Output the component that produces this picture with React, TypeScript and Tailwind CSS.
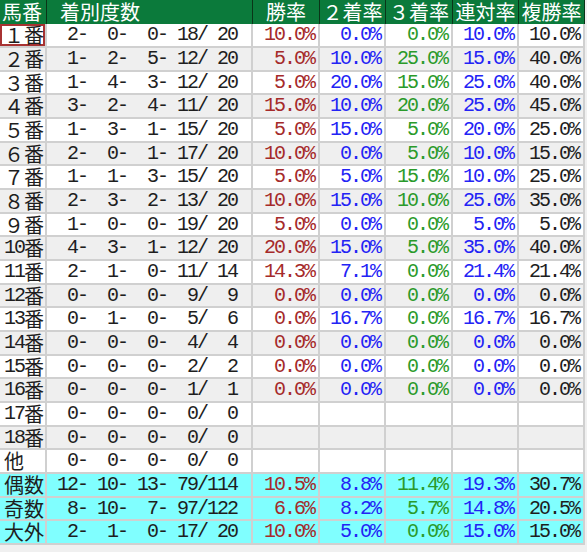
import React from "react";

type Row = {
  label: string;
  counts: number[];
  rates?: string[];
  kind: "white" | "gray" | "cyan";
};

const RAW: [string, number[], string[] | null][] = [
  ["１番", [2, 0, 0, 18, 20], ["10.0", "0.0", "0.0", "10.0", "10.0"]],
  ["２番", [1, 2, 5, 12, 20], ["5.0", "10.0", "25.0", "15.0", "40.0"]],
  ["３番", [1, 4, 3, 12, 20], ["5.0", "20.0", "15.0", "25.0", "40.0"]],
  ["４番", [3, 2, 4, 11, 20], ["15.0", "10.0", "20.0", "25.0", "45.0"]],
  ["５番", [1, 3, 1, 15, 20], ["5.0", "15.0", "5.0", "20.0", "25.0"]],
  ["６番", [2, 0, 1, 17, 20], ["10.0", "0.0", "5.0", "10.0", "15.0"]],
  ["７番", [1, 1, 3, 15, 20], ["5.0", "5.0", "15.0", "10.0", "25.0"]],
  ["８番", [2, 3, 2, 13, 20], ["10.0", "15.0", "10.0", "25.0", "35.0"]],
  ["９番", [1, 0, 0, 19, 20], ["5.0", "0.0", "0.0", "5.0", "5.0"]],
  ["10番", [4, 3, 1, 12, 20], ["20.0", "15.0", "5.0", "35.0", "40.0"]],
  ["11番", [2, 1, 0, 11, 14], ["14.3", "7.1", "0.0", "21.4", "21.4"]],
  ["12番", [0, 0, 0, 9, 9], ["0.0", "0.0", "0.0", "0.0", "0.0"]],
  ["13番", [0, 1, 0, 5, 6], ["0.0", "16.7", "0.0", "16.7", "16.7"]],
  ["14番", [0, 0, 0, 4, 4], ["0.0", "0.0", "0.0", "0.0", "0.0"]],
  ["15番", [0, 0, 0, 2, 2], ["0.0", "0.0", "0.0", "0.0", "0.0"]],
  ["16番", [0, 0, 0, 1, 1], ["0.0", "0.0", "0.0", "0.0", "0.0"]],
  ["17番", [0, 0, 0, 0, 0], null],
  ["18番", [0, 0, 0, 0, 0], null],
  ["他", [0, 0, 0, 0, 0], null],
];

const SUMMARY: [string, number[], string[]][] = [
  ["偶数", [12, 10, 13, 79, 114], ["10.5", "8.8", "11.4", "19.3", "30.7"]],
  ["奇数", [8, 10, 7, 97, 122], ["6.6", "8.2", "5.7", "14.8", "20.5"]],
  ["大外", [2, 1, 0, 17, 20], ["10.0", "5.0", "0.0", "15.0", "15.0"]],
];

const ROWS: Row[] = [
  ...RAW.map(([label, counts, rates], i) => ({
    label,
    counts,
    rates: rates ?? undefined,
    kind: (i % 2 === 0 ? "white" : "gray") as Row["kind"],
  })),
  ...SUMMARY.map(([label, counts, rates]) => ({
    label,
    counts,
    rates,
    kind: "cyan" as const,
  })),
];

const HEADERS = ["勝率", "２着率", "３着率", "連対率", "複勝率"];
const RATE_COLORS = [
  "text-[#a52a2a]",
  "text-[#2323f5]",
  "text-[#2a9a2a]",
  "text-[#2323f5]",
  "text-[#1e1e1e]",
];

const jp = "font-['Noto_Sans_CJK_JP',sans-serif]";
const num = "font-['Liberation_Mono',monospace] text-[20px] tracking-[-2px]";

function pad(n: number) {
  return String(n).padStart(3, " ");
}

function countText(c: number[]) {
  return `${pad(c[0])}-${pad(c[1])}-${pad(c[2])}-${pad(c[3])}/${pad(c[4])}`;
}

function Label({ text }: { text: string }) {
  // half-width numbers (10番〜) are drawn in the mono face
  const m = text.match(/^([0-9]+)(.*)$/);
  if (!m) return <>{text}</>;
  return (
    <>
      <span className={num}>{m[1]}</span>
      <span>{m[2]}</span>
    </>
  );
}

export default function App() {
  return (
    <div className="h-[552px] w-[587px] overflow-hidden bg-[#f0f0f0]">
      <div className="grid w-[585px] grid-cols-[47px_206px_67px_66px_67px_66px_66px]">
        {/* header */}
        <div
          className={`${jp} flex h-[24px] items-center whitespace-nowrap border-r border-[#0a3518] bg-[#0b7a3b] pl-[2px] text-[20px] leading-[22px] text-white`}
        >
          馬番
        </div>
        <div
          className={`${jp} flex h-[24px] items-center border-r border-[#0a3518] bg-[#0b7a3b] pl-[13px] text-[20px] leading-[22px] text-white`}
        >
          着別度数
        </div>
        {HEADERS.map((h) => (
          <div
            key={h}
            className={`${jp} flex h-[24px] items-center justify-center whitespace-nowrap border-r border-[#0a3518] bg-[#0b7a3b] text-[20px] leading-[22px] text-white`}
          >
            {h}
          </div>
        ))}

        {ROWS.map((r, i) => {
          const bg =
            r.kind === "cyan"
              ? "bg-[#80ffff]"
              : r.kind === "gray"
                ? "bg-[#efefef]"
                : "bg-white";
          const h = i % 3 === 2 ? "h-[23px]" : "h-[24px]";
          const cell = `${bg} ${h} flex items-center border-r-2 border-b-2 border-[#d0d0d0] leading-[20px]`;
          return (
            <React.Fragment key={r.label}>
              <div
                className={`${cell} ${jp} whitespace-nowrap pl-[4px] text-[20px] text-[#1e1e1e] ${
                  i === 0 ? "ring-2 ring-inset ring-[#a83232]" : ""
                }`}
              >
                <Label text={r.label} />
              </div>
              <div
                className={`${cell} ${num} justify-end whitespace-pre pr-[14px] text-[#1e1e1e]`}
              >
                {countText(r.counts)}
              </div>
              {[0, 1, 2, 3, 4].map((k) => (
                <div
                  key={k}
                  className={`${cell} ${num} justify-end pr-[4px] ${RATE_COLORS[k]}`}
                >
                  {r.rates ? `${r.rates[k]}%` : ""}
                </div>
              ))}
            </React.Fragment>
          );
        })}
      </div>
    </div>
  );
}
